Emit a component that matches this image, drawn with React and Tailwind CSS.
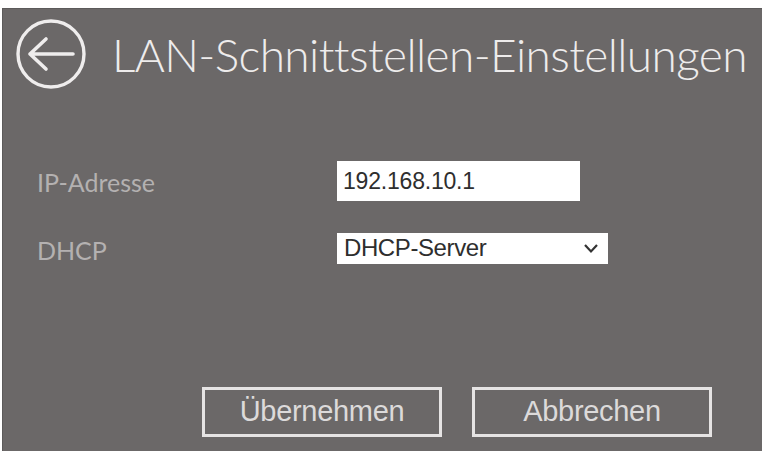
import React from "react";

const FIELDS = [
  { label: "IP-Adresse", value: "192.168.10.1" },
  { label: "DHCP", value: "DHCP-Server", select: true },
];

function BackIcon() {
  return (
    <svg width="72" height="72" viewBox="0 0 72 72" fill="none">
      <circle cx="36" cy="36" r="33" stroke="#efeded" strokeWidth="3.4" />
      <path
        d="M15 36 H58 M15 36 L31 21 M15 36 L31 51"
        stroke="#efeded"
        strokeWidth="3.6"
        strokeLinecap="round"
        strokeLinejoin="round"
      />
    </svg>
  );
}

function Chevron() {
  return (
    <svg width="16" height="11" viewBox="0 0 16 11" fill="none">
      <path d="M2 2 L8 8.5 L14 2" stroke="#333" strokeWidth="2.2" />
    </svg>
  );
}

export default function App() {
  return (
    <div className="w-[762px] h-[451px] bg-white pt-[8px] pl-[2px] overflow-hidden">
      <div className="h-full bg-[#6b6868] border-t border-l border-[#5c5a5a] flex flex-col">
        {/* Kopfzeile */}
        <div className="flex items-center pl-[12px] pt-[9px]">
          <BackIcon />
          <h1 className="ml-[25px] font-['Lato',sans-serif] font-light text-[46px] leading-none text-[#eeecec] tracking-[-0.6px] mt-[2px]">
            LAN-Schnittstellen-Einstellungen
          </h1>
        </div>

        {/* Formular */}
        <div className="mt-[70px] flex flex-col gap-[26px]">
          {FIELDS.map((f) => (
            <div key={f.label} className="flex items-center">
              <span className="w-[334px] pl-[34px] pt-[4px] font-['Lato',sans-serif] text-[25px] text-[#b4b1b1]">
                {f.label}
              </span>
              {f.select ? (
                <div className="w-[271px] h-[31px] bg-white flex items-center justify-between pl-[7px] pr-[9px]">
                  <span className="font-['Liberation_Sans',Arial,sans-serif] text-[24px] text-[#2e2e2e] tracking-[-0.4px]">
                    {f.value}
                  </span>
                  <Chevron />
                </div>
              ) : (
                <div className="w-[243px] h-[40px] bg-white flex items-center pl-[6px]">
                  <span className="font-['Liberation_Sans',Arial,sans-serif] text-[23px] text-[#2e2e2e] tracking-[-0.2px]">
                    {f.value}
                  </span>
                </div>
              )}
            </div>
          ))}
        </div>

        {/* Schaltflächen */}
        <div className="mt-auto mb-[14px] flex gap-[30px] pl-[199px]">
          {["Übernehmen", "Abbrechen"].map((t) => (
            <button
              key={t}
              className="w-[240px] h-[50px] border-[3px] border-[#e6e4e4] font-['Liberation_Sans',Arial,sans-serif] text-[29px] text-[#dcdada] tracking-[-0.3px] flex items-center justify-center"
            >
              {t}
            </button>
          ))}
        </div>
      </div>
    </div>
  );
}
